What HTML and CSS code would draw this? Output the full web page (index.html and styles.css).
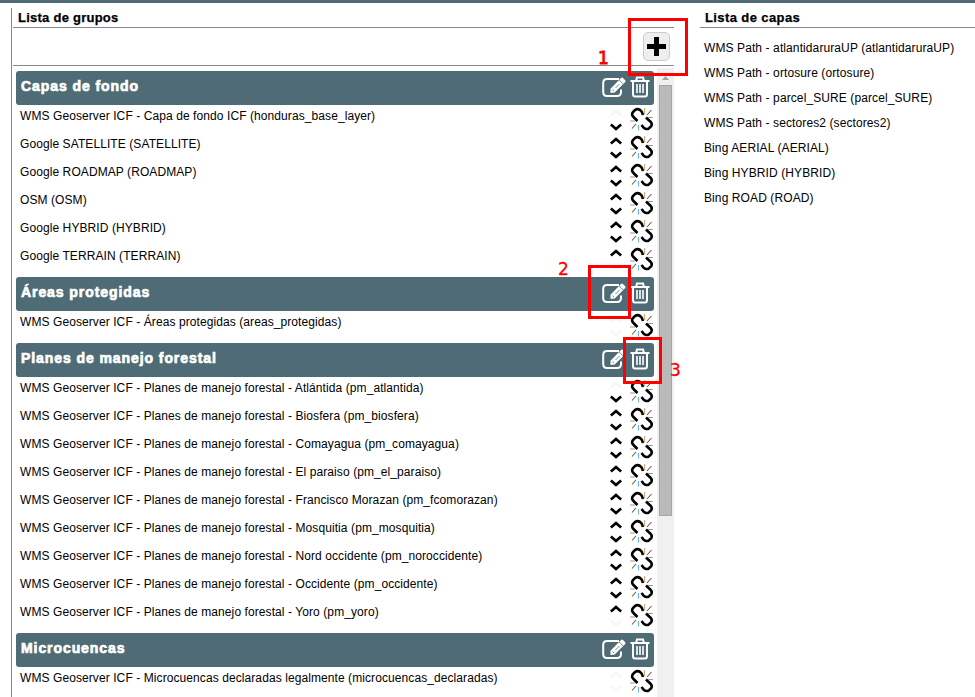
FILE: index.html
```
<!DOCTYPE html>
<html lang="es">
<head>
<meta charset="utf-8">
<title>Lista de grupos</title>
<link rel="stylesheet" href="styles.css">
</head>
<body>
<svg class="defs" width="0" height="0">
  <symbol id="edit" viewBox="0 0 24 22">
    <path d="M17 3H5Q1.200 3 1.200 7V16Q1.200 20 5 20H15Q19 20 19 16V13.500" fill="none" stroke="#fff" stroke-width="2"/>
    <path d="M8.500 17V12.700L19 2Q20 1 21 2L23.200 4.200Q24 5 23.200 6L12.700 16.500Z" fill="#fff"/>
    <path d="M17.200 4L21 7.900M10.500 13.500L12 15M13.500 12L17.500 8" stroke="#4f6b75" stroke-width=".8"/>
  </symbol>
  <symbol id="trash" viewBox="0 0 20 22">
    <path d="M.500 5H19.500M6 5L7 1.500H13L14 5M3 5V18Q3 20.500 5 20.500H15Q17 20.500 17 18V5" fill="none" stroke="#fff" stroke-width="2"/>
    <path d="M7 8V17M10 8V17M13 8V17" stroke="#fff" stroke-width="1.600"/>
  </symbol>
  <symbol id="unlink" viewBox="0 0 24 24">
    <path d="M13 8Q12.500 4.500 10 2.800Q7.500 1.300 5 3L3 5Q1.200 7.500 3 9.500L7.500 14M16 10.500L20.500 14.700Q22.700 17 21 19.500L19 21.300Q16.500 22.900 14 21L11.500 18" fill="none" stroke="#000" stroke-width="2.600"/>
    <path d="M14.500 1V7" stroke="#e0a766" stroke-width="1.100"/>
    <path d="M8.500 18V23.500" stroke="#6db3e8" stroke-width="1.100"/>
    <path d="M21.500 3L17 8M6 17L2 21.500" stroke="#6b5a54" stroke-width="1.100"/>
    <path d="M18 10.500H23M0 14H5" stroke="#999" stroke-width="1.200"/>
  </symbol>
  <symbol id="arrow" viewBox="0 0 12 8">
    <path d="M.900 6.500L6 2L11.100 6.500" fill="none" stroke="currentColor" stroke-width="2.700"/>
  </symbol>
</svg>
<div class="topbar"></div>
<main class="columns">
  <section class="groups">
    <h2>Lista de grupos</h2>
    <div class="toolbar"><button class="add" aria-label="Agregar"><svg width="19" height="19"><path d="M9.500 0V19M0 9.500H19" stroke="#000" stroke-width="5"/></svg></button></div>
    <div class="scroller">
      <div class="list">
        <div class="group"><h3>Capas de fondo</h3><svg class="edit"><use href="#edit"/></svg><svg class="trash"><use href="#trash"/></svg></div>
        <ul>
          <li class="first"><span>WMS Geoserver ICF - Capa de fondo ICF (honduras_base_layer)</span><i><svg><use href="#arrow"/></svg><svg><use href="#arrow"/></svg></i><svg class="unlink"><use href="#unlink"/></svg></li>
          <li><span>Google SATELLITE (SATELLITE)</span><i><svg><use href="#arrow"/></svg><svg><use href="#arrow"/></svg></i><svg class="unlink"><use href="#unlink"/></svg></li>
          <li><span>Google ROADMAP (ROADMAP)</span><i><svg><use href="#arrow"/></svg><svg><use href="#arrow"/></svg></i><svg class="unlink"><use href="#unlink"/></svg></li>
          <li><span>OSM (OSM)</span><i><svg><use href="#arrow"/></svg><svg><use href="#arrow"/></svg></i><svg class="unlink"><use href="#unlink"/></svg></li>
          <li><span>Google HYBRID (HYBRID)</span><i><svg><use href="#arrow"/></svg><svg><use href="#arrow"/></svg></i><svg class="unlink"><use href="#unlink"/></svg></li>
          <li class="last"><span>Google TERRAIN (TERRAIN)</span><i><svg><use href="#arrow"/></svg><svg><use href="#arrow"/></svg></i><svg class="unlink"><use href="#unlink"/></svg></li>
        </ul>
        <div class="group"><h3>Áreas protegidas</h3><svg class="edit"><use href="#edit"/></svg><svg class="trash"><use href="#trash"/></svg></div>
        <ul>
          <li class="first last"><span>WMS Geoserver ICF - Áreas protegidas (areas_protegidas)</span><i><svg><use href="#arrow"/></svg><svg><use href="#arrow"/></svg></i><svg class="unlink"><use href="#unlink"/></svg></li>
        </ul>
        <div class="group"><h3>Planes de manejo forestal</h3><svg class="edit"><use href="#edit"/></svg><svg class="trash"><use href="#trash"/></svg></div>
        <ul>
          <li class="first"><span>WMS Geoserver ICF - Planes de manejo forestal - Atlántida (pm_atlantida)</span><i><svg><use href="#arrow"/></svg><svg><use href="#arrow"/></svg></i><svg class="unlink"><use href="#unlink"/></svg></li>
          <li><span>WMS Geoserver ICF - Planes de manejo forestal - Biosfera (pm_biosfera)</span><i><svg><use href="#arrow"/></svg><svg><use href="#arrow"/></svg></i><svg class="unlink"><use href="#unlink"/></svg></li>
          <li><span>WMS Geoserver ICF - Planes de manejo forestal - Comayagua (pm_comayagua)</span><i><svg><use href="#arrow"/></svg><svg><use href="#arrow"/></svg></i><svg class="unlink"><use href="#unlink"/></svg></li>
          <li><span>WMS Geoserver ICF - Planes de manejo forestal - El paraiso (pm_el_paraiso)</span><i><svg><use href="#arrow"/></svg><svg><use href="#arrow"/></svg></i><svg class="unlink"><use href="#unlink"/></svg></li>
          <li><span>WMS Geoserver ICF - Planes de manejo forestal - Francisco Morazan (pm_fcomorazan)</span><i><svg><use href="#arrow"/></svg><svg><use href="#arrow"/></svg></i><svg class="unlink"><use href="#unlink"/></svg></li>
          <li><span>WMS Geoserver ICF - Planes de manejo forestal - Mosquitia (pm_mosquitia)</span><i><svg><use href="#arrow"/></svg><svg><use href="#arrow"/></svg></i><svg class="unlink"><use href="#unlink"/></svg></li>
          <li><span>WMS Geoserver ICF - Planes de manejo forestal - Nord occidente (pm_noroccidente)</span><i><svg><use href="#arrow"/></svg><svg><use href="#arrow"/></svg></i><svg class="unlink"><use href="#unlink"/></svg></li>
          <li><span>WMS Geoserver ICF - Planes de manejo forestal - Occidente (pm_occidente)</span><i><svg><use href="#arrow"/></svg><svg><use href="#arrow"/></svg></i><svg class="unlink"><use href="#unlink"/></svg></li>
          <li class="last"><span>WMS Geoserver ICF - Planes de manejo forestal - Yoro (pm_yoro)</span><i><svg><use href="#arrow"/></svg><svg><use href="#arrow"/></svg></i><svg class="unlink"><use href="#unlink"/></svg></li>
        </ul>
        <div class="group"><h3>Microcuencas</h3><svg class="edit"><use href="#edit"/></svg><svg class="trash"><use href="#trash"/></svg></div>
        <ul>
          <li class="first last"><span>WMS Geoserver ICF - Microcuencas declaradas legalmente (microcuencas_declaradas)</span><i><svg><use href="#arrow"/></svg><svg><use href="#arrow"/></svg></i><svg class="unlink"><use href="#unlink"/></svg></li>
        </ul>
      </div>
      <div class="track"><svg width="7" height="4"><path d="M0 4L3.500 0L7 4Z" fill="#a3a3a3"/></svg><div class="thumb"></div></div>
    </div>
  </section>
  <section class="layers">
    <h2>Lista de capas</h2>
    <ul>
      <li>WMS Path - atlantidaruraUP (atlantidaruraUP)</li>
      <li>WMS Path - ortosure (ortosure)</li>
      <li>WMS Path - parcel_SURE (parcel_SURE)</li>
      <li>WMS Path - sectores2 (sectores2)</li>
      <li>Bing AERIAL (AERIAL)</li>
      <li>Bing HYBRID (HYBRID)</li>
      <li>Bing ROAD (ROAD)</li>
    </ul>
  </section>
</main>
<div class="mark mark-add"></div><b class="num num-add">1</b>
<div class="mark mark-edit"></div><b class="num num-edit">2</b>
<div class="mark mark-trash"></div><b class="num num-trash">3</b>
</body>
</html>
```
FILE: styles.css
```
* { box-sizing: border-box; }
body {
  margin: 0;
  height: 697px;
  overflow: hidden;
  position: relative;
  background: #fff;
  color: #000;
  font: 12px/16px "Liberation Sans", Arial, sans-serif;
}
.defs { position: absolute; }
svg { display: block; }
ul { list-style: none; margin: 0; padding: 0; }
.topbar { height: 3px; background: #4f6b75; }
.columns { display: flex; height: 694px; padding: 5px 0 0 11px; }
.groups {
  width: 663px;
  border-left: 1px solid #888;
  padding-left: 1px;
  display: flex;
  flex-direction: column;
}
h2 {
  margin: 0;
  height: 20px;
  flex: none;
  padding-left: 5px;
  border-bottom: 1px solid #888;
  font-size: 13px;
  line-height: 19px;
  letter-spacing: .25px;
  -webkit-text-stroke: .25px #000;
}
.layers h2 { letter-spacing: .4px; }
.toolbar {
  height: 38px;
  flex: none;
  border-bottom: 1px solid #888;
  display: flex;
  justify-content: flex-end;
  padding: 4px 4px 0 0;
}
.add {
  width: 27px;
  height: 29px;
  padding: 0;
  border: 1px solid #ccc;
  border-radius: 5px;
  background: #eee;
  display: grid;
  place-items: center;
}
.scroller { flex: 1; min-height: 0; display: flex; justify-content: space-between; padding-top: 2px; overflow: hidden; }
.list { width: 641px; padding: 3px 0 0 3px; }
.group {
  height: 34px;
  border-radius: 3px;
  background: #4f6b75;
  display: flex;
  align-items: flex-start;
  padding: 5px 4px 0 5px;
}
.group h3 {
  flex: 1;
  margin: 0;
  padding-top: 1px;
  color: #fff;
  font-size: 14px;
  line-height: 18px;
  letter-spacing: .92px;
  -webkit-text-stroke: .7px #fff;
}
.edit { width: 24px; height: 22px; margin-right: 4px; }
.trash { width: 20px; height: 22px; }
.list ul { padding-bottom: 4px; }
.list li { height: 28px; display: flex; padding: 3px 0 0 4px; }
.list li span { flex: 1; white-space: nowrap; letter-spacing: .085px; }
i { width: 12px; height: 24px; margin-right: 8px; display: flex; flex-direction: column; justify-content: space-between; padding: 1px 0; }
i svg { width: 12px; height: 8px; }
i svg:last-child { transform: scaleY(-1); }
.first i svg:first-child, .last i svg:last-child { color: #f7f7f7; }
.unlink { width: 24px; height: 24px; margin-top: -1px; }
.track { width: 17px; background: #f0f0f0; padding: 8px 2px 0; }
.track svg { margin: 0 auto 5px; }
.thumb { height: 431px; border: 1px solid #a6a6a6; background: #bababa; }
.layers { width: 275px; margin-left: 26px; }
.layers ul { padding: 8px 0 0 4px; }
.layers li { height: 25px; line-height: 25px; letter-spacing: .1px; }
.mark { position: absolute; border: 3px solid #f00; }
.mark-add { left: 628px; top: 18px; width: 60px; height: 58px; }
.mark-edit { left: 588px; top: 265px; width: 43px; height: 54px; }
.mark-trash { left: 623px; top: 337px; width: 39px; height: 47px; }
.num { position: absolute; color: #f00; font: 17px/20px "DejaVu Sans", Verdana, sans-serif; -webkit-text-stroke: .3px #f00; }
.num-add { left: 598px; top: 48px; -webkit-text-stroke-width: .8px; }
.num-edit { left: 558px; top: 259px; }
.num-trash { left: 670px; top: 360px; }
```
